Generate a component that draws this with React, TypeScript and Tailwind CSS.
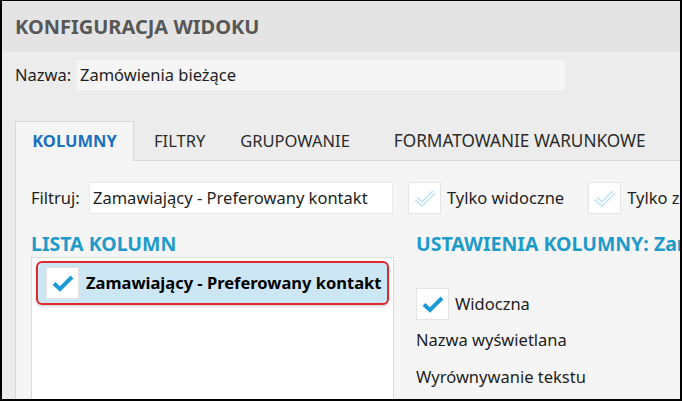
import React from "react";

const font = { fontFamily: '"Segoe UI", "Noto Sans", "Open Sans", sans-serif' };

function BlueCheck() {
  return (
    <svg width="22" height="18" viewBox="0 0 22 18">
      <path d="M2 9.5 L8 15 L20 3" fill="none" stroke="#1b9ad8" strokeWidth="4" strokeLinejoin="miter" />
    </svg>
  );
}

function LightCheck() {
  return (
    <svg width="22" height="18" viewBox="0 0 22 18">
      <path d="M2 9.5 L8 15 L20 3" fill="none" stroke="#b3e0f5" strokeWidth="4.5" />
      <path d="M2 9.5 L8 15 L20 3" fill="none" stroke="#ffffff" strokeWidth="2" />
    </svg>
  );
}

function Box({ children, className = "" }: { children: React.ReactNode; className?: string }) {
  return (
    <div className={`w-[33px] h-[32px] bg-white border border-[#e4e4e4] flex items-center justify-center shrink-0 ${className}`}>
      {children}
    </div>
  );
}

export default function App() {
  return (
    <div
      className="w-[682px] h-[401px] overflow-hidden border-t border-l-2 border-r-2 border-b-2 border-black bg-[#ececec] text-[#1e1e1e] flex flex-col"
      style={font}
    >
      {/* header */}
      <div className="h-[51px] shrink-0 bg-[#e4e4e4] flex items-center pl-[13px]">
        <h1 className="text-[20px] font-bold text-[#575757] leading-none">KONFIGURACJA WIDOKU</h1>
      </div>

      {/* nazwa */}
      <div className="flex items-center pl-[13px] mt-[8px] h-[30px]">
        <span className="text-[16.5px] w-[62px] shrink-0">Nazwa:</span>
        <div className="w-[488px] h-[30px] shrink-0 bg-[#f5f5f5] flex items-center pl-[3px] text-[16.5px]">Zamówienia bieżące</div>
      </div>

      {/* tabs */}
      <div className="flex flex-col pl-[13px] mt-[32px] flex-1 min-h-0">
        <div className="flex items-end h-[39px] shrink-0">
          <div className="h-[40px] w-[119px] shrink-0 bg-[#f5f5f5] border border-[#d9d9d9] border-b-0 flex items-center justify-center text-[16.5px] font-bold text-[#1a72bd] relative z-10">
            KOLUMNY
          </div>
          <div className="flex-1 h-[39px] border-b border-[#d9d9d9] flex items-center text-[16.5px] text-[#2b2b2b] whitespace-nowrap">
            <span className="ml-[20px]">FILTRY</span>
            <span className="ml-[35px]">GRUPOWANIE</span>
            <span className="ml-[44px] text-[17.2px]">FORMATOWANIE WARUNKOWE</span>
          </div>
        </div>

        <div className="flex-1 bg-[#f5f5f5] border-l border-[#d9d9d9] pl-[15px] pt-[21px] flex flex-col min-h-0">
          {/* filter row */}
          <div className="flex items-center h-[32px] whitespace-nowrap shrink-0">
            <span className="text-[16.5px] w-[58px] shrink-0">Filtruj:</span>
            <div className="w-[304px] h-[32px] shrink-0 bg-white border border-[#e9e9e9] flex items-center pl-[3px] text-[16.5px]">
              Zamawiający - Preferowany kontakt
            </div>
            <Box className="ml-[15px]">
              <LightCheck />
            </Box>
            <span className="ml-[6px] text-[16.5px] shrink-0">Tylko widoczne</span>
            <Box className="ml-[24px]">
              <LightCheck />
            </Box>
            <span className="ml-[6px] text-[16.5px] shrink-0">Tylko zmienione</span>
          </div>

          <div className="flex flex-1 min-h-0">
            <div className="w-[363px] flex flex-col shrink-0">
              <h2 className="mt-[19px] text-[19.5px] font-bold text-[#1e9bc8] leading-[22px]">LISTA KOLUMN</h2>
              <div className="mt-[2px] flex-1 bg-white border border-[#dcdcdc] border-b-0 pt-[3px] px-[4px]">
                <div className="h-[44px] rounded-[6px] border-2 border-[#e0262e] bg-[#cce6f3] flex items-center pl-[8px] shadow-[0_2px_3px_rgba(0,0,0,0.15)]">
                  <Box className="w-[32px] h-[31px]">
                    <BlueCheck />
                  </Box>
                  <span className="ml-[7px] text-[16.5px] font-bold text-black whitespace-nowrap">Zamawiający - Preferowany kontakt</span>
                </div>
              </div>
            </div>

            <div className="flex flex-col ml-[22px] flex-1 min-w-0">
              <h2 className="mt-[19px] text-[19.5px] font-bold text-[#1e9bc8] leading-[22px] whitespace-nowrap">
                USTAWIENIA KOLUMNY: Zamawiający - Preferowany kontakt
              </h2>
              <div className="mt-[33px] flex items-center">
                <Box>
                  <BlueCheck />
                </Box>
                <span className="ml-[6px] text-[16.5px]">Widoczna</span>
              </div>
              <div className="mt-[9px] text-[16.5px] leading-[22px] whitespace-nowrap">Nazwa wyświetlana</div>
              <div className="mt-[15px] text-[16.5px] leading-[22px] whitespace-nowrap">Wyrównywanie tekstu</div>
            </div>
          </div>
        </div>
      </div>
    </div>
  );
}
